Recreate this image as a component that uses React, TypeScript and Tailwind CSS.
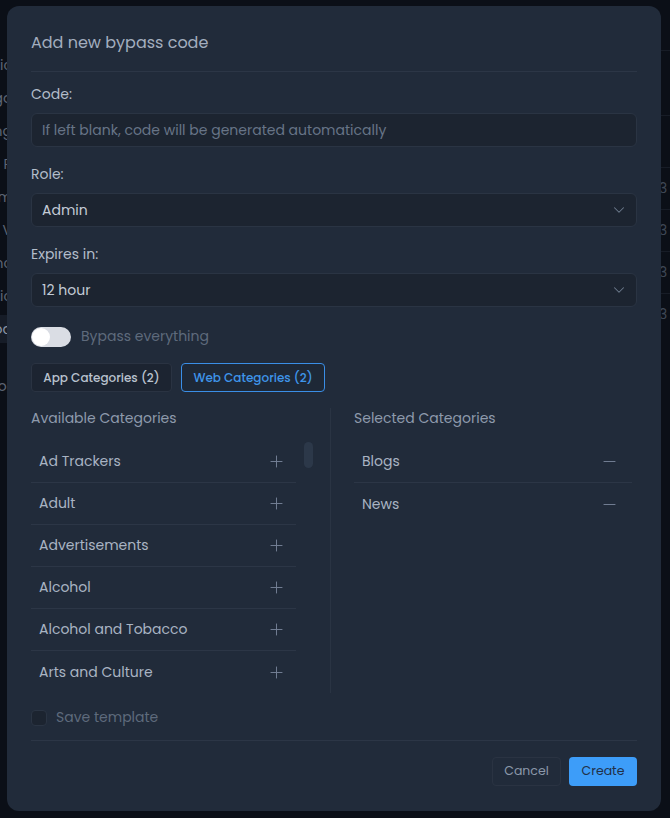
import { ChevronDown, Plus, Minus } from "lucide-react";

const available = [
  "Ad Trackers",
  "Adult",
  "Advertisements",
  "Alcohol",
  "Alcohol and Tobacco",
  "Arts and Culture",
];

const selected = ["Blogs", "News"];

const leftPeeks = [
  { text: "Statistic", top: "mt-[55px]" },
  { text: "Logo", top: "mt-[13px]" },
  { text: "Blocking", top: "mt-[13px]" },
  { text: "Users R", top: "mt-[13px]" },
  { text: "Program", top: "mt-[13px]" },
  { text: "DNS V", top: "mt-[13px]" },
  { text: "Sync", top: "mt-[13px]" },
  { text: "Logic", top: "mt-[13px]" },
];

function Backdrop() {
  return (
    <div className="flex min-h-[818px] w-[670px] bg-[#0b0f17]">
      <div className="flex w-[12px] flex-col items-end overflow-hidden text-[14px] leading-[20px] text-[#5d6574]">
        {leftPeeks.map((p) => (
          <div key={p.text} className={`${p.top} whitespace-nowrap`}>
            {p.text}
          </div>
        ))}
        <div className="mt-[9px] flex h-[28px] w-full items-center justify-end whitespace-nowrap bg-[#161c27] text-[#8a93a3]">
          Bypass cod
        </div>
        <div className="mt-[33px] whitespace-nowrap">Monitor</div>
      </div>
      <div className="flex-1" />
      <div className="flex w-[20px] flex-col text-[14px] text-[#3f4856]">
        <div className="mt-[50px] h-px bg-[#171c26]" />
        <div className="mt-[64px] h-px bg-[#171c26]" />
        <div className="mt-[51px] h-px bg-[#171c26]" />
        <div className="flex h-[41px] items-center pl-[9px]">3</div>
        <div className="h-px bg-[#171c26]" />
        <div className="flex h-[41px] items-center pl-[9px]">3</div>
        <div className="h-px bg-[#171c26]" />
        <div className="flex h-[41px] items-center pl-[9px]">3</div>
        <div className="h-px bg-[#171c26]" />
        <div className="flex h-[41px] items-center pl-[9px]">3</div>
      </div>
    </div>
  );
}

function Field({ label, children, className = "" }: { label: string; children: React.ReactNode; className?: string }) {
  return (
    <div className={className}>
      <div className="text-[14px] leading-[20px] text-[#b3bdca]">{label}</div>
      <div className="mt-[9px]">{children}</div>
    </div>
  );
}

function SelectBox({ value }: { value: string }) {
  return (
    <div className="flex h-[34px] items-center justify-between rounded-[6px] border border-[#2a3443] bg-[#1c2430] pl-[10px] pr-[8px] text-[14px] text-[#c3cbd6]">
      <span className="pt-px">{value}</span>
      <ChevronDown size={18} strokeWidth={1.4} className="text-[#6e7b8e]" />
    </div>
  );
}

export default function App() {
  return (
    <div
      className="relative h-[818px] w-[670px] overflow-hidden"
      style={{ fontFamily: "Poppins, 'Open Sans', sans-serif" }}
    >
      <Backdrop />

      <div className="absolute left-[7px] top-[6px] w-[654px] rounded-[12px] bg-[#212b3a] px-[24px] pb-[25px] pt-[24px]">
        <h2 className="pt-px text-[16px] leading-[24px] text-[#a3aebf]">Add new bypass code</h2>
        <div className="mt-[16px] h-px bg-[#2c3646]" />

        <Field label="Code:" className="mt-[12px]">
          <div className="flex h-[34px] items-center rounded-[6px] border border-[#2a3443] bg-[#1c2430] px-[10px] text-[14px] text-[#677487]">
            If left blank, code will be generated automatically
          </div>
        </Field>

        <Field label="Role:" className="mt-[17px]">
          <SelectBox value="Admin" />
        </Field>

        <Field label="Expires in:" className="mt-[17px]">
          <SelectBox value="12 hour" />
        </Field>

        <div className="mt-[19px] flex items-center gap-[10px]">
          <div className="flex h-[20px] w-[40px] items-center rounded-full bg-[#dadde4] px-[1px]">
            <div className="h-[18px] w-[18px] rounded-full bg-white" />
          </div>
          <span className="text-[14px] text-[#5e6a7c]">Bypass everything</span>
        </div>

        <div className="mt-[16px] flex gap-[9px]">
          <button className="flex h-[29px] w-[141px] items-center justify-center rounded-[4px] border border-[#2a3342] bg-[#1c2431] text-[12px] font-medium text-[#b9c2ce]">
            App Categories (2)
          </button>
          <button className="flex h-[29px] w-[144px] items-center justify-center rounded-[4px] border border-[#3a8ee6] bg-[#1e2836] text-[12px] font-medium text-[#3f95ea]">
            Web Categories (2)
          </button>
        </div>

        <div className="mt-[16px] flex">
          <div className="w-[300px] border-r border-[#2a3443]">
            <div className="text-[14px] leading-[20px] text-[#8e9aac]">Available Categories</div>
            <div className="mt-[13px] flex">
              <div className="w-[265px]">
                {available.map((name, i) => (
                  <div
                    key={name}
                    className={`flex h-[42px] items-center justify-between pl-[8px] pr-[10px] text-[14px] text-[#a9b4c3] ${
                      i < available.length - 1 ? "border-b border-[#2c3646]" : ""
                    }`}
                  >
                    <span>{name}</span>
                    <Plus size={19} strokeWidth={1.2} className="text-[#758196]" />
                  </div>
                ))}
              </div>
              <div className="ml-[8px] mt-px h-[26px] w-[9px] rounded-full bg-[#2c3849]" />
            </div>
          </div>

          <div className="flex-1 pl-[23px] pr-[5px]">
            <div className="text-[14px] leading-[20px] text-[#8e9aac]">Selected Categories</div>
            <div className="mt-[13px]">
              {selected.map((name, i) => (
                <div
                  key={name}
                  className={`flex h-[42px] items-center justify-between pl-[8px] pr-[13px] text-[14px] text-[#a9b4c3] ${
                    i < selected.length - 1 ? "border-b border-[#2c3646]" : ""
                  }`}
                >
                  <span>{name}</span>
                  <Minus size={19} strokeWidth={1.2} className="text-[#758196]" />
                </div>
              ))}
            </div>
          </div>
        </div>

        <div className="mt-[14px] flex items-center gap-[9px]">
          <div className="h-[16px] w-[16px] rounded-[4px] border border-[#2a3443] bg-[#1c2430]" />
          <span className="text-[14px] text-[#5e6a7c]">Save template</span>
        </div>

        <div className="mt-[12px] h-px bg-[#2c3646]" />

        <div className="mt-[16px] flex justify-end gap-[8px]">
          <button className="flex h-[29px] w-[69px] items-center justify-center rounded-[4px] border border-[#2a3342] text-[12.5px] text-[#8c98aa]">
            Cancel
          </button>
          <button className="flex h-[29px] w-[68px] items-center justify-center rounded-[4px] bg-[#3d9df9] text-[12.5px] text-[#213047]">
            Create
          </button>
        </div>
      </div>
    </div>
  );
}
